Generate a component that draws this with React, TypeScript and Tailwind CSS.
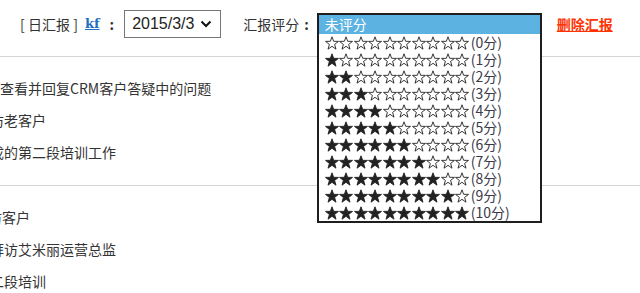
const cjk = '"Noto Sans CJK SC", "Noto Sans", sans-serif';

const scoreOptions = Array.from({ length: 11 }, (_, i) => i);

function Star({ filled }: { filled: boolean }) {
  return (
    <svg className="shrink-0" width="14.5" height="14" viewBox="0 0 14.5 14">
      <polygon
        points="7,0.8 8.65,5.3 13.5,5.4 9.6,8.4 11,13.2 7,10.3 3,13.2 4.4,8.4 0.5,5.4 5.35,5.3"
        fill={filled ? "#222" : "#fff"}
        stroke="#222"
        strokeWidth="0.9"
        strokeLinejoin="miter"
      />
    </svg>
  );
}

function ScoreList() {
  return (
    <div className="absolute left-0 top-[3px] w-[225px] border-2 border-[#1e1e1e] bg-white text-[14px] leading-[17px] text-[#222]">
      <div className="h-[19px] bg-[#5cb3e1] pl-[6px] text-white leading-[19px]">未评分</div>
      {scoreOptions.map((n) => (
        <div key={n} className="flex h-[17px] items-center whitespace-nowrap pl-[6px]">
          {Array.from({ length: 10 }, (_, i) => (
            <Star key={i} filled={i < n} />
          ))}
          <span className="ml-[1px] text-[#3a3a48]">({n}分)</span>
        </div>
      ))}
    </div>
  );
}

function Section({ lines }: { lines: { lead: string; text: string; shift: number }[] }) {
  return (
    <div className="overflow-hidden border-b border-[#d4d4d4] pt-[15px] pb-[17px]">
      {lines.map((l, i) => (
        <div key={i} className="h-[32px] whitespace-nowrap leading-[32px]" style={{ marginLeft: l.shift }}>
          {l.lead}
          {l.text}
        </div>
      ))}
    </div>
  );
}

export default function App() {
  return (
    <div className="h-[293px] w-[640px] overflow-hidden bg-white text-[14px] text-[#333]" style={{ fontFamily: cjk }}>
      {/* header */}
      <div className="flex h-[57px] items-start border-b border-[#d4d4d4] pt-[10px]">
        <div className="flex h-[28px] items-center pl-[20px]">
          <span className="w-[8px]">[</span>
          <span>日汇报</span>
          <span className="w-[8px] text-right">]</span>
          <a className="ml-[7px] font-bold text-[#1d6fc4] underline" style={{ fontFamily: '"DejaVu Serif", serif', fontSize: 13 }}>
            kf
          </a>
          <span className="ml-[10px] font-bold">:</span>
        </div>
        <div className="ml-[10px] flex h-[28px] w-[97px] items-center border border-[#767676] pl-[7px] text-[16px] text-[#222]" style={{ fontFamily: '"Liberation Sans", sans-serif' }}>
          <span>2015/3/3</span>
          <svg className="ml-[6px]" width="12" height="8" viewBox="0 0 12 8">
            <path d="M1.5 1.5 L6 6 L10.5 1.5" fill="none" stroke="#111" strokeWidth="2" />
          </svg>
        </div>
        <div className="ml-[22px] flex h-[28px] items-center">
          汇报评分<span className="ml-[5px] font-bold">:</span>
        </div>
        <div className="relative ml-[8px] h-[28px] w-[225px]">
          <ScoreList />
        </div>
        <div className="ml-[15px] flex h-[28px] items-center">
          <a className="font-bold text-[#ff3300] underline">删除汇报</a>
        </div>
      </div>

      <Section
        lines={[
          { lead: "", text: "查看并回复CRM客户答疑中的问题", shift: 0 },
          { lead: "访", text: "老客户", shift: -10 },
          { lead: "成", text: "的第二段培训工作", shift: -10 },
        ]}
      />
      <Section
        lines={[
          { lead: "访", text: "客户", shift: -12 },
          { lead: "拜", text: "访艾米丽运营总监", shift: -10 },
          { lead: "二", text: "段培训", shift: -10 },
        ]}
      />
    </div>
  );
}
